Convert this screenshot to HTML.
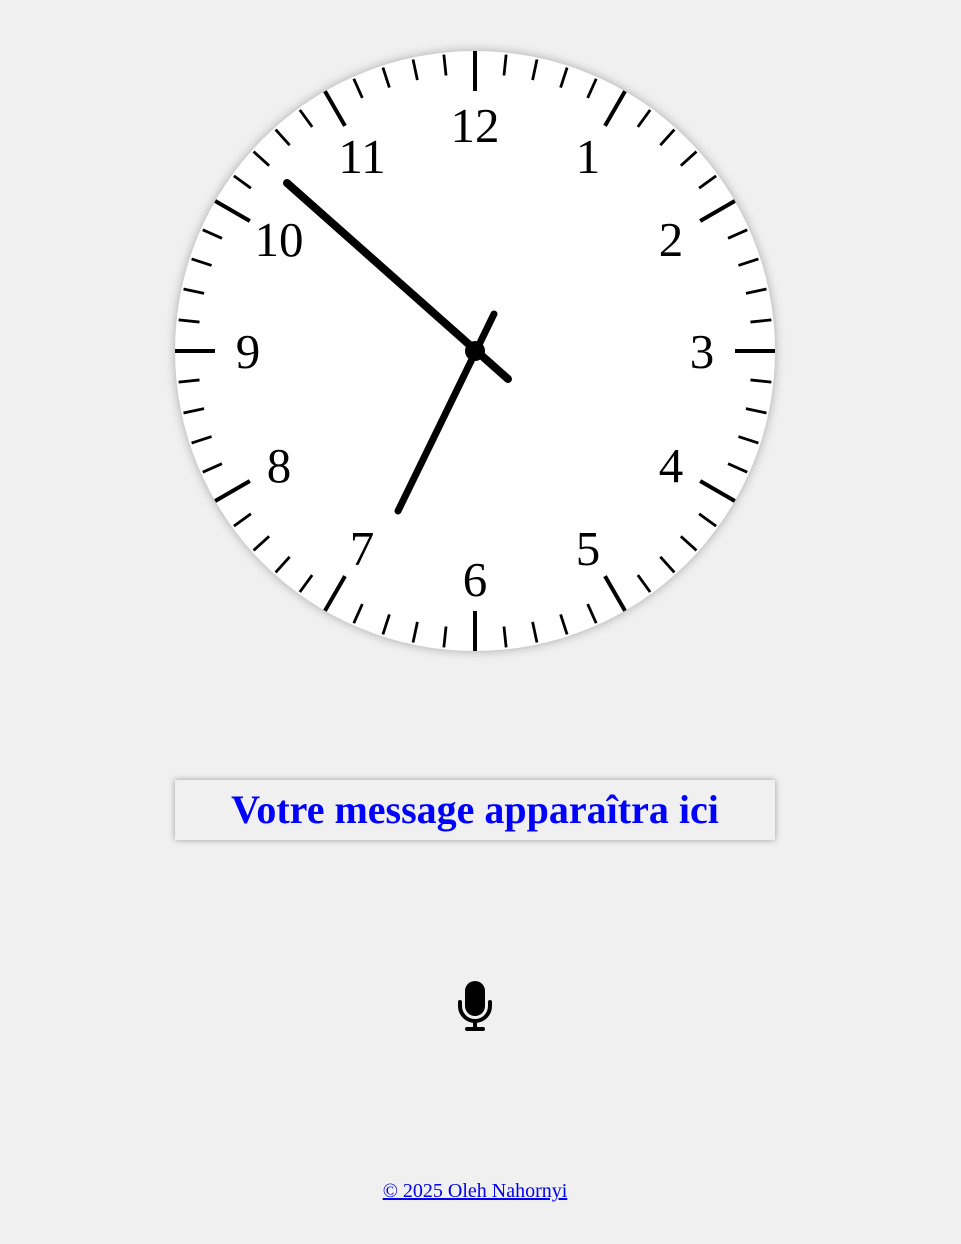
<!DOCTYPE html>
<html><head><meta charset="utf-8"><style>
html,body{margin:0;padding:0;background:#f0f0f0;width:961px;height:1244px;overflow:hidden;font-family:"Liberation Serif",serif}
svg.clock{position:absolute;left:165px;top:41px;filter:drop-shadow(0 0 5px rgba(0,0,0,.3))}
.msg{position:absolute;left:175px;top:780px;width:600px;height:60px;background:#f0f0f0;box-shadow:0 0 6px rgba(0,0,0,.35);text-align:center;color:#0000ff;font-weight:bold;font-size:40px;line-height:60px}
.mic{position:absolute;left:455px;top:978px}
.foot{position:absolute;left:0;width:950px;top:1180px;text-align:center;font-size:20px}
.foot a{color:#0000ee}
</style></head><body>
<svg class="clock" width="620" height="620" viewBox="-310 -310 620 620">
<circle r="300" fill="#fff"/>
<g stroke="#000" stroke-width="2.8">
<line y1="-298" y2="-277" transform="rotate(6)"/><line y1="-298" y2="-277" transform="rotate(12)"/><line y1="-298" y2="-277" transform="rotate(18)"/><line y1="-298" y2="-277" transform="rotate(24)"/>
<line y1="-298" y2="-277" transform="rotate(36)"/><line y1="-298" y2="-277" transform="rotate(42)"/><line y1="-298" y2="-277" transform="rotate(48)"/><line y1="-298" y2="-277" transform="rotate(54)"/>
<line y1="-298" y2="-277" transform="rotate(66)"/><line y1="-298" y2="-277" transform="rotate(72)"/><line y1="-298" y2="-277" transform="rotate(78)"/><line y1="-298" y2="-277" transform="rotate(84)"/>
<line y1="-298" y2="-277" transform="rotate(96)"/><line y1="-298" y2="-277" transform="rotate(102)"/><line y1="-298" y2="-277" transform="rotate(108)"/><line y1="-298" y2="-277" transform="rotate(114)"/>
<line y1="-298" y2="-277" transform="rotate(126)"/><line y1="-298" y2="-277" transform="rotate(132)"/><line y1="-298" y2="-277" transform="rotate(138)"/><line y1="-298" y2="-277" transform="rotate(144)"/>
<line y1="-298" y2="-277" transform="rotate(156)"/><line y1="-298" y2="-277" transform="rotate(162)"/><line y1="-298" y2="-277" transform="rotate(168)"/><line y1="-298" y2="-277" transform="rotate(174)"/>
<line y1="-298" y2="-277" transform="rotate(186)"/><line y1="-298" y2="-277" transform="rotate(192)"/><line y1="-298" y2="-277" transform="rotate(198)"/><line y1="-298" y2="-277" transform="rotate(204)"/>
<line y1="-298" y2="-277" transform="rotate(216)"/><line y1="-298" y2="-277" transform="rotate(222)"/><line y1="-298" y2="-277" transform="rotate(228)"/><line y1="-298" y2="-277" transform="rotate(234)"/>
<line y1="-298" y2="-277" transform="rotate(246)"/><line y1="-298" y2="-277" transform="rotate(252)"/><line y1="-298" y2="-277" transform="rotate(258)"/><line y1="-298" y2="-277" transform="rotate(264)"/>
<line y1="-298" y2="-277" transform="rotate(276)"/><line y1="-298" y2="-277" transform="rotate(282)"/><line y1="-298" y2="-277" transform="rotate(288)"/><line y1="-298" y2="-277" transform="rotate(294)"/>
<line y1="-298" y2="-277" transform="rotate(306)"/><line y1="-298" y2="-277" transform="rotate(312)"/><line y1="-298" y2="-277" transform="rotate(318)"/><line y1="-298" y2="-277" transform="rotate(324)"/>
<line y1="-298" y2="-277" transform="rotate(336)"/><line y1="-298" y2="-277" transform="rotate(342)"/><line y1="-298" y2="-277" transform="rotate(348)"/><line y1="-298" y2="-277" transform="rotate(354)"/>
</g>
<g stroke="#000" stroke-width="4">
<line y1="-300" y2="-260"/><line y1="-300" y2="-260" transform="rotate(30)"/><line y1="-300" y2="-260" transform="rotate(60)"/><line y1="-300" y2="-260" transform="rotate(90)"/>
<line y1="-300" y2="-260" transform="rotate(120)"/><line y1="-300" y2="-260" transform="rotate(150)"/><line y1="-300" y2="-260" transform="rotate(180)"/><line y1="-300" y2="-260" transform="rotate(210)"/>
<line y1="-300" y2="-260" transform="rotate(240)"/><line y1="-300" y2="-260" transform="rotate(270)"/><line y1="-300" y2="-260" transform="rotate(300)"/><line y1="-300" y2="-260" transform="rotate(330)"/>
</g>
<g font-family="Liberation Serif,serif" font-size="49" text-anchor="middle" fill="#000">
<text x="0" y="-209">12</text><text x="113" y="-178">1</text><text x="196" y="-95">2</text>
<text x="227" y="17">3</text><text x="196" y="131">4</text><text x="113" y="214">5</text>
<text x="0" y="245">6</text><text x="-113" y="214">7</text><text x="-196" y="131">8</text>
<text x="-227" y="17">9</text><text x="-196" y="-95">10</text><text x="-113" y="-178">11</text>
</g>
<g stroke="#000" stroke-linecap="round">
<line x1="33" y1="28" x2="-188" y2="-168" stroke-width="8"/>
<line x1="19" y1="-37" x2="-77" y2="160" stroke-width="7"/>
</g>
<circle r="10" fill="#000"/>
</svg>
<div class="msg">Votre message apparaîtra ici</div>
<svg class="mic" width="40" height="56" viewBox="0 0 40 56">
<rect x="10" y="3" width="20" height="35" rx="10" fill="#000"/>
<path d="M5 24 v4 a15 15 0 0 0 30 0 v-4" fill="none" stroke="#000" stroke-width="4" stroke-linecap="round"/>
<path d="M20 43 v8" stroke="#000" stroke-width="4"/>
<path d="M12 51 h16" stroke="#000" stroke-width="4" stroke-linecap="round"/>
</svg>
<div class="foot"><a href="#">© 2025 Oleh Nahornyi</a></div>
</body></html>
